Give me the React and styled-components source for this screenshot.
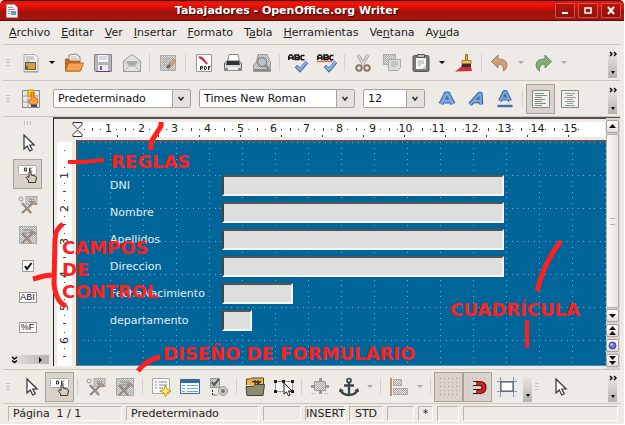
import React from "react";
import styled, { createGlobalStyle, css } from "styled-components";

const FACE = "#eeebe7";
const LINE = "#cfc5bd";
const RED = "#ff2020";
const SEA = "#006699";

const GlobalStyle = createGlobalStyle`
  * { box-sizing: border-box; }
  html, body { margin: 0; background: #fff; }
  body, button, input, select {
    font-family: "DejaVu Sans", sans-serif;
    font-size: 11px;
    color: #222;
  }
`;

/* ---------- window frame ---------- */

const Window = styled.div`
  position: relative;
  display: flex;
  flex-direction: column;
  height: 100vh;
  min-height: 424px;
  border-right: 1px solid #fff;
  border-bottom: 1px solid #fff;
  background: ${FACE};
  overflow: hidden;
`;

const TitleBar = styled.header`
  display: flex;
  align-items: center;
  gap: 3px;
  height: 21px;
  padding: 0 3px 0 6px;
  border-top: 1px solid #3a0b08;
  border-bottom: 1px solid #5c0805;
  border-radius: 5px 5px 0 0;
  background: linear-gradient(#e01408 0, #f41408 15%, #c01009 48%, #9c130c 56%, #ab140c 100%);
`;

const Title = styled.h1`
  flex: 1;
  margin: 0;
  font-size: 11px;
  font-weight: bold;
  text-align: center;
  white-space: nowrap;
  color: #fff;
  text-shadow: 1px 1px 1px #300;
`;

const FrameButton = styled.button`
  display: grid;
  place-items: center;
  width: 20px;
  height: 15px;
  padding: 0;
  border: 1px solid #d3524b;
  border-radius: 1px;
  background: linear-gradient(#b5150e, #8e110b);
`;

const MenuBar = styled.nav`
  display: flex;
  align-items: center;
  gap: 11px;
  height: 24px;
  margin: 0 4px 0 3px;
  padding-left: 6px;
  border-bottom: 1px solid ${LINE};
`;

const MenuItem = styled.button`
  padding: 0;
  border: 0;
  background: none;
  white-space: pre;
`;

/* ---------- toolbars ---------- */

const ToolBar = styled.div`
  display: flex;
  flex: none;
  align-items: center;
  height: ${(p) => p.$height}px;
  margin: 0 4px 0 3px;
  padding-right: 3px;
  border-bottom: 1px solid ${LINE};
`;

const Grip = styled.span`
  flex: none;
  width: ${(p) => (p.$across ? 7 : 4)}px;
  height: ${(p) => (p.$across ? 4 : 7)}px;
  margin: ${(p) => (p.$across ? "4px auto 0" : "0 6px 0 3px")};
  background: repeating-linear-gradient(
    ${(p) => (p.$across ? "to right" : "to bottom")}, #c9c2ba 0 1px, transparent 1px 3px);
`;

const Tool = styled.button`
  display: grid;
  flex: none;
  place-items: center;
  width: 29px;
  height: 30px;
  padding: 0;
  border: 1px solid transparent;
  background: none;
  ${(p) => p.$on && css`
    border-color: #a8a099;
    background: #d9d3cc;
  `}
  svg { display: block; }
`;

const FormatGroup = styled.div`
  display: flex;
  align-items: center;
  margin-left: 7px;
`;

const Drop = styled.button`
  display: grid;
  flex: none;
  place-items: center;
  width: 14px;
  height: 30px;
  padding: 0;
  border: 0;
  background: none;
  &::after {
    content: "";
    border: 3px solid transparent;
    border-top-color: ${(p) => (p.$dim ? "#aaa69f" : "#000")};
    border-bottom: 0;
  }
`;

const Divider = styled.span`
  flex: none;
  width: 1px;
  height: 17px;
  margin: 0 3px;
  background: #d6d0c9;
`;

const More = styled.button`
  display: flex;
  flex: none;
  flex-direction: column;
  align-items: center;
  justify-content: space-between;
  width: 9px;
  height: 30px;
  margin-left: ${(p) => (p.$inline ? "2px" : "auto")};
  padding: ${(p) => (p.$inline ? "22px 0 4px" : "3px 0 4px")};
  border: 0;
  background: linear-gradient(transparent 10%, #b5b1ac);
  &::after {
    content: "";
    border: 2px solid transparent;
    border-top: 3px solid #000;
    border-bottom: 0;
  }
`;

const Combo = styled.select`
  flex: none;
  width: ${(p) => p.$width}px;
  height: 19px;
  margin-left: 8px;
  padding: 0 20px 0 4px;
  border: 1px solid #aaa39b;
  border-radius: 2px;
  appearance: none;
  outline: 0;
  color: #111;
  background:
    url("data:image/svg+xml,%3Csvg xmlns='http://www.w3.org/2000/svg' width='18' height='17'%3E%3Cpath d='M0 0h18v17H0z' fill='%23e5e1dc'/%3E%3Cpath d='M.5 0v17' stroke='%23aaa39b'/%3E%3Cpath d='M6.500 7l2.500 3 2.500-3' fill='none' stroke='%23333' stroke-width='1.600'/%3E%3C/svg%3E")
    right center / 18px 17px no-repeat #fff;
`;

/* ---------- work area ---------- */

const Work = styled.main`
  display: flex;
  flex: 1;
  min-height: 0;
  margin: 0 4px 0 3px;
  border-bottom: 1px solid ${LINE};
`;

const Palette = styled.aside`
  display: flex;
  flex: none;
  flex-direction: column;
  align-items: center;
  width: 50px;
  padding: 0 1px 5px 0;
`;

const PaletteTools = styled.div`
  display: flex;
  flex: 1;
  flex-direction: column;
  justify-content: space-between;
  margin: 3px 0 12px;
`;

const PaletteMore = styled.button`
  display: flex;
  align-items: center;
  justify-content: space-between;
  width: 43px;
  height: 9px;
  padding: 0 7px 0 5px;
  border: 0;
  background: linear-gradient(to right, transparent, #b5b1ac);
`;

const Editor = styled.section`
  display: grid;
  flex: 1;
  grid-template-columns: 22px 1fr;
  grid-template-rows: 21px 1fr;
  min-width: 0;
  margin-bottom: 3px;
  border-top: 2px solid #55524f;
  border-left: 1px solid #222;
`;

const RulerRow = styled.div`
  display: flex;
  grid-column: 1 / -1;
  align-items: center;
  padding-left: 18px;
`;

const Scale = styled.ol`
  display: flex;
  flex: 1;
  height: 15px;
  margin: 0 1px 0 0;
  padding: 0 18px 0 0;
  list-style: none;
  background:
    repeating-linear-gradient(to right, transparent 0 34px, #333 34px 35px, transparent 35px 41px) left bottom / 100% 2px no-repeat,
    #fff;
`;

const Unit = styled.li`
  display: grid;
  flex: 1;
  place-items: center;
  height: 13px;
  line-height: 13px;
  color: #222;
  background:
    linear-gradient(#444, #444) 0 6px / 1px 3px no-repeat,
    linear-gradient(#444, #444) 25% 7px / 1px 1px no-repeat,
    linear-gradient(#444, #444) 75% 7px / 1px 1px no-repeat;
`;

const RulerLead = styled.li`
  width: 9px;
  background: linear-gradient(#444, #444) 1px 7px / 1px 1px no-repeat;
`;

const SideScale = styled.ol`
  width: 15px;
  margin: 2px 0 0 3px;
  padding: 17px 0 0;
  list-style: none;
  overflow: hidden;
  background: linear-gradient(#444, #444) 7px 8px / 1px 1px no-repeat, #fff;
`;

const SideUnit = styled.li`
  height: 33px;
  line-height: 15px;
  text-align: center;
  writing-mode: vertical-rl;
  transform: rotate(180deg);
  background:
    linear-gradient(#444, #444) 6px 0 / 3px 1px no-repeat,
    linear-gradient(#444, #444) 7px 8px / 1px 1px no-repeat,
    linear-gradient(#444, #444) 7px 24px / 1px 1px no-repeat;
`;

const Page = styled.div`
  position: relative;
  min-width: 0;
  padding: 33px 0 0 32px;
  border-top: 2px solid #555;
  border-left: 2px solid #555;
  border-bottom: 1px solid #4a8fb4;
  background: ${SEA};
  overflow: hidden;
`;

const Dots = styled.svg`
  position: absolute;
  inset: 0;
  width: 100%;
  height: 100%;
`;

const Form = styled.form`
  position: relative;
  display: grid;
  gap: 6px;
`;

const Field = styled.label`
  display: grid;
  grid-template-columns: 112px 1fr;
  align-items: center;
  height: 21px;
  color: #e3eef4;
`;

const Entry = styled.input`
  width: ${(p) => p.$width}px;
  height: 21px;
  padding: 0 3px;
  border: 2px solid;
  border-color: #555 #f5f5f5 #f5f5f5 #444;
  border-radius: 0;
  outline: 0;
  background: #dedede;
`;

const ScrollColumn = styled.div`
  display: flex;
  flex: none;
  flex-direction: column;
  gap: 2px;
  width: 14px;
  padding: 2px 0 2px;
  border-top: 1px solid #55524f;
  background: #d8d3cd;
`;

const ScrollButton = styled.button`
  display: grid;
  flex: none;
  place-items: center;
  width: 13px;
  height: 13px;
  padding: 0;
  border: 1px solid #aaa49d;
  border-radius: 2px;
  background: linear-gradient(#fff, #e4dfda);
`;

const Thumb = styled.div`
  display: grid;
  flex: 1;
  place-items: center;
  width: 13px;
  margin: -1px 0;
  border: 1px solid #b4aea7;
  border-radius: 2px;
  background: linear-gradient(to right, #fafafa, #e6e3df);
  &::after {
    content: "";
    width: 5px;
    height: 5px;
    border: solid #b4aea7;
    border-width: 1px 0;
  }
`;

/* ---------- status bar ---------- */

const StatusBar = styled.footer`
  display: flex;
  flex: none;
  gap: 4px;
  height: 20px;
  padding: 2px 6px 3px 8px;
`;

const StatusCell = styled.span`
  flex: ${(p) => (p.$width ? "none" : "1")};
  width: ${(p) => p.$width}px;
  padding: 0 ${(p) => (p.$tight ? 0 : 4)}px;
  border: 1px solid;
  border-color: #bbb5ae #fff #fff #bbb5ae;
  line-height: 14px;
  text-align: ${(p) => (p.$tight ? "center" : "left")};
  white-space: pre;
`;

/* ---------- red notes above the window ---------- */

const Strokes = styled.svg`
  position: absolute;
  top: 0;
  left: 0;
  pointer-events: none;
`;

const Note = styled.strong`
  position: absolute;
  left: ${(p) => p.$x}px;
  top: ${(p) => p.$y}px;
  color: ${RED};
  font-size: 18px;
  line-height: 22px;
  white-space: pre;
  pointer-events: none;
`;

/* ---------- icons ---------- */

const Svg = ({ children, size = 20 }) => (
  <svg width={size} height={size} viewBox="0 0 20 20" fill="none" aria-hidden="true">{children}</svg>
);

const Pointer = () => (
  <path d="M6 2v14l3.300-3 2.400 5 2.500-1.200-2.400-4.800h4.300z" fill="#fff" stroke="#333" strokeWidth="1.200" />
);

const Hand = () => (
  <path d="M10.500 18.500v-2L8 13.500l1-1 2 1V8q1-1.500 2 0v3l4 1q1.500.500 1.500 2l-1 4.500z" fill="#d9cdc0" stroke="#333" />
);

const Hammer = () => (
  <>
    <path d="M4 18l11-10M4 8l9 10" stroke="#8c8a87" strokeWidth="2.200" />
    <path d="M12 7l4 0 2 3M9 13l4 5" stroke="#b08a75" strokeWidth="2" />
  </>
);

const Spell = ({ red }) => (
  <>
    <g stroke="#111" strokeWidth="1.500">
      <path d="M.800 7V3.500L2 2h1.500L5 3.500V7M.700 5H5" />
      <path d="M7 2v4.500h3.500l1-1-1-1H7 10.500l.800-1-.800-1.500z" />
      <path d="M16.500 2.500h-2.700l-.800 1v2.500l.800.700h2.700" />
    </g>
    {red && <path d="M0 9l1.500-1 1.500 1 1.500-1L6 9l1.500-1L9 9l1.500-1L12 9l1.500-1L15 9" stroke="#e22" />}
    <path d="M8 13l4 4 7-8" stroke="#3f6da5" strokeWidth="3.600" />
    <path d="M8.500 13.500l3.500 3 6.500-7.500" stroke="#8db4e2" strokeWidth="2" />
  </>
);

const icons = {
  text: (
    <>
      <path d="M3 1.500h11l3 3v14H3z" fill="#f2f2f0" stroke="#aaa" />
      <path d="M5 4h8M5 6h9M5 8h4" stroke="#aaa" />
      <path d="M4 9h11v8H4z" fill="#6d5828" />
      <path d="M5 10h9v3H5z" fill="#a8a090" />
      <path d="M7 13l3-2 4 2v3H7z" fill="#e0a22c" />
      <path d="M2.500 19h15" stroke="#999" />
    </>
  ),
  open: (
    <>
      <path d="M5 8V2l7-1 4 3v7H5z" fill="#eee" stroke="#888" />
      <path d="M7 4h5M7 6h7" stroke="#bbb" />
      <path d="M1.500 18V6h3l1 2h10v10z" fill="#c46a25" stroke="#b55d1d" />
      <path d="M1.500 18l3-8h15l-3 8z" fill="#f5a352" stroke="#c56a24" />
    </>
  ),
  save: (
    <>
      <path d="M1.500 1.500h17v17h-16l-1-1z" fill="#b4b4bd" stroke="#84848f" />
      <path d="M5 2h10v7H5z" fill="#f4f4f6" />
      <path d="M6 4h8M6 6h8" stroke="#bbb" />
      <path d="M5 12h10v6H5z" fill="#ececf0" />
      <path d="M7 13h2v4H7z" fill="#666" />
      <path d="M3 18.500h14" stroke="#713c6d" />
    </>
  ),
  mail: (
    <>
      <path d="M1.500 8L10 1.500 18.500 8v10.500h-17z" fill="#e3e3e0" stroke="#999" />
      <path d="M4 8h12l-3 4H7z" fill="#aaa" />
      <path d="M2 18l6-6h4l6 6M2 8l6 5h4l6-5" stroke="#aaa" />
    </>
  ),
  edit: (
    <>
      <path d="M2.500 2.500h15v15h-15z" fill="url(#dither)" stroke="#aaa" />
      <path d="M5 6h10M5 9h8M5 12h5" stroke="#aaa" />
      <path d="M17 7l-6 6-2 2" stroke="#7c6048" strokeWidth="3" />
      <path d="M17 7l-5 5" stroke="#e0a878" strokeWidth="2" />
    </>
  ),
  pdf: (
    <>
      <path d="M2.500 1.500h15v17h-15z" fill="#fbfbfb" stroke="#999" />
      <path d="M5 4l4 2 4 5M7 4l3 4" stroke="#dc2430" strokeWidth="2" />
      <path d="M6.500 17v-3.500h2v1.700h-2M10.500 13.500v3h1.300l.7-.8v-1.500l-.7-.7zM14.500 17v-3.500h2M14.500 15h1.500" stroke="#222" />
    </>
  ),
  print: (
    <>
      <path d="M4.500 9L6 1.500h9L16.500 9" fill="#fff" stroke="#888" />
      <path d="M1.500 16V10l3-2h11l3 2v6z" fill="#d8d8d8" stroke="#666" />
      <path d="M4 8h12l1 4H3z" fill="#333" />
      <path d="M1 15h18v3H1z" fill="#888" />
      <path d="M5 14h10v3H5z" fill="#eee" />
    </>
  ),
  preview: (
    <>
      <path d="M4.500 9L6 1.500h9l3.500 8v9h-17V12z" fill="url(#dither)" stroke="#999" />
      <path d="M2 16h16v2H2z" fill="#888" />
      <circle cx="10" cy="9" r="4.500" fill="#b8c4cb" stroke="#888" strokeWidth="1.500" />
      <path d="M13 12l4 4" stroke="#888" strokeWidth="2.500" />
    </>
  ),
  spell: <Spell />,
  autospell: <Spell red />,
  cut: (
    <>
      <path d="M5 2l6 10M15 2L9 12" stroke="#999" strokeWidth="3.200" />
      <path d="M5 2l6 10M15 2L9 12" stroke="#ddd" strokeWidth="1.500" />
      <circle cx="6" cy="15" r="2.700" stroke="#8a7768" strokeWidth="2" />
      <circle cx="14" cy="15" r="2.700" stroke="#8a7768" strokeWidth="2" />
    </>
  ),
  copy: (
    <>
      <path d="M1.500 1.500h12v10h-12z" fill="url(#dither)" stroke="#aaa" />
      <path d="M6.500 6.500h12v8l-3 3h-9z" fill="#deddd9" stroke="#aaa" />
      <path d="M9 9h7M9 11h7M9 13h5" stroke="#aaa" />
    </>
  ),
  paste: (
    <>
      <rect x="2" y="2.500" width="16" height="16" rx="1.500" fill="#777a6c" stroke="#555850" />
      <path d="M5 5h10v11H5z" fill="#f5f5f2" />
      <path d="M6.500 1.500h7v3h-7z" fill="#bbb" stroke="#555" />
      <path d="M7 8h6M7 10h6M7 12h3" stroke="#aaa" />
      <path d="M15 12l-4 4h4z" fill="#ccc" />
    </>
  ),
  brush: (
    <>
      <path d="M11.500 1.500h2v6h-2z" fill="#e5a85c" stroke="#a36a24" />
      <path d="M8 7.500h9v3H8z" fill="#f0c36a" stroke="#a37a24" />
      <path d="M8 11h9v4H7z" fill="#333" />
      <path d="M7 14h10l1 4-17 .5z" fill="#d52e37" />
    </>
  ),
  undo: <path d="M1.500 8.500L8 2v4q9 0 9 6 0 4-3.500 6 1-7-5.500-7v4z" fill="#cf9d7b" stroke="#a87d62" />,
  redo: <path d="M18.500 8.500L12 2v4q-9 0-9 6 0 4 3.500 6-1-7 5.500-7v4z" fill="#85ac79" stroke="#5f8f62" />,
  styles: (
    <>
      <path d="M1.500 1.500h17v17h-17z" fill="#e8e8e2" stroke="#888" />
      <path d="M7 1v18M13 1v18M1 7h18M1 13h18" stroke="#999" />
      <path d="M7 1h6v6H7z" fill="#f9cf16" stroke="#b99a1a" />
      <path d="M9 15l-1.500-4L10 11V4q1.500-1.500 2.500 0v4l4 1.500v5L15 16H11z" fill="#ff9b2f" stroke="#d96a13" />
      <path d="M10 15.500h6V18h-6z" fill="#1e4f92" />
    </>
  ),
  bold: (
    <>
      <path d="M4 15L9 5h2l5 10M6 12h8" stroke="#2e5f9e" strokeWidth="5" strokeLinejoin="round" />
      <path d="M4 15L9 5h2l5 10M6 12h8" stroke="#7ba7de" strokeWidth="3" strokeLinejoin="round" />
    </>
  ),
  italic: (
    <>
      <path d="M4 15.500L13.500 5h1l.500 10.500M7 12h8" stroke="#2e5f9e" strokeWidth="4.400" strokeLinejoin="round" />
      <path d="M4 15.500L13.500 5h1l.500 10.500M7 12h8" stroke="#7ba7de" strokeWidth="2.400" strokeLinejoin="round" />
    </>
  ),
  underline: (
    <>
      <path d="M5 12L9.500 3h1L15 12M7 9.500h6" stroke="#2e5f9e" strokeWidth="4" strokeLinejoin="round" />
      <path d="M5 12L9.500 3h1L15 12M7 9.500h6" stroke="#7ba7de" strokeWidth="2" strokeLinejoin="round" />
      <path d="M2.500 17h15" stroke="#3c6dad" strokeWidth="2.400" />
    </>
  ),
  left: (
    <>
      <path d="M1.500 1.500h17v17h-17z" fill="#eef0ea" stroke="#888" />
      <path d="M4 4.500h9M4 6.500h12M4 8.500h7M4 10.500h10M4 12.500h7M4 14.500h11M4 16.500h7" stroke="#888" />
    </>
  ),
  center: (
    <>
      <path d="M1.500 1.500h17v17h-17z" fill="#eef0ea" stroke="#888" />
      <path d="M5 4.500h10M7 6.500h6M4 8.500h12M7 10.500h6M5 12.500h10M7 14.500h6M5 16.500h10" stroke="#999" />
    </>
  ),
  pointer: <Pointer />,
  design: (
    <>
      <rect x=".500" y="1.500" width="18" height="9" rx="1" fill="#fff" stroke="#aaa" />
      <path d="M6.500 4v3h2V4zM11.500 3.500v4M14 3.500l-2 2 2 2" stroke="#333" />
      <Hand />
    </>
  ),
  control: (
    <>
      <rect x="8" y="1.500" width="11" height="8" fill="url(#dither)" stroke="#aaa" />
      <path d="M11.500 4v3h2V4zM15.500 3.500v4" stroke="#999" />
      <circle cx="3" cy="4" r="2" stroke="#999" />
      <Hammer />
    </>
  ),
  props: (
    <>
      <path d="M1.500 1.500h17v17h-17z" fill="url(#dither)" stroke="#aaa" />
      <path d="M5 5h10M5 8h10M5 11h4" stroke="#888" />
      <Hammer />
    </>
  ),
  check: (
    <>
      <path d="M4.500 4.500h11v11h-11z" fill="#fff" stroke="#999" />
      <path d="M7 10l2 3 4.500-6" stroke="#111" strokeWidth="2" />
    </>
  ),
  wizard: (
    <>
      <path d="M1.500 1.500h17v15h-17z" fill="#f8f8f8" stroke="#aaa" />
      <path d="M4 5h2M8 5h8M4 8h2M8 8h8M4 11h2M8 11h4" stroke="#888" />
      <path d="M14.500 8l1.700 4.300 4 1.700-4 1.700-1.700 4-1.700-4-4-1.700 4-1.700z" fill="#ffee62" stroke="#b89b1e" />
    </>
  ),
  table: (
    <>
      <path d="M.500 2.500h19v14H.500z" fill="#f8fafc" stroke="#3568a3" />
      <path d="M1 3h18v3H1z" fill="#3568a3" />
      <path d="M2 8.500h3M2 11.500h3M2 14.500h3M7 8.500h11M7 11.500h11M7 14.500h11" stroke="#7fa0c6" />
    </>
  ),
  more: (
    <>
      <path d="M1.500 1.500h9v9h-9z" fill="url(#dither)" stroke="#999" />
      <path d="M3 5l2 3 5-6" stroke="#555" strokeWidth="2" />
      <circle cx="14" cy="14" r="4.500" fill="#ccc" stroke="#999" />
      <circle cx="14" cy="14" r="2" fill="#777" />
      <path d="M3.500 13v5h5" stroke="#333" strokeDasharray="2 1" />
    </>
  ),
  folder: (
    <>
      <path d="M1.500 8V2h4l1-1h12v9" fill="#e9b84a" stroke="#54451e" />
      <path d="M7 5l3-1v2l3-2v3l3-3" stroke="#222" strokeWidth="1.300" />
      <path d="M1 9.500h7l2-2h9.500l-1.500 11H2z" fill="#8b8d73" stroke="#404233" />
    </>
  ),
  select: (
    <>
      <path d="M1.500 4.500h17v10h-17z" fill="#f8f8f8" stroke="#999" />
      <path d="M0 3h3v3H0zM8 3h3v3H8zM17 3h3v3h-3zM0 13h3v3H0zM17 13h3v3h-3z" fill="#222" />
      <path d="M10 6v11l2.500-2 2 4 1.500-1-1.500-4H18z" fill="#fff" stroke="#222" />
    </>
  ),
  position: (
    <>
      <path d="M4.500 4.500h11v9h-11z" fill="url(#dither)" stroke="#999" />
      <path d="M9 1h3v3H9zM9 14h3v3H9zM1 8h3v3H1zM16 8h3v3h-3z" fill="#999" />
      <path d="M1.500 16.500h4M15 16.500h4" stroke="#aaa" strokeDasharray="1 1" />
    </>
  ),
  anchor: (
    <>
      <circle cx="10" cy="3.500" r="2" stroke="#3b444b" strokeWidth="1.700" />
      <path d="M10 6v12M5 8.500h10M1.500 13q2 5 8.500 5t8.500-5" stroke="#3b444b" strokeWidth="2.300" />
      <path d="M0 15l1-4 4 3zM20 15l-1-4-4 3z" fill="#3b444b" />
    </>
  ),
  align: (
    <>
      <path d="M2 1v18" stroke="#c29068" strokeWidth="2" />
      <path d="M4.500 2.500h8v6h-8zM4.500 11.500h14v6h-14z" fill="url(#dither)" stroke="#aaa" />
    </>
  ),
  grid: (
    <path d="M1 1.500h19M1 5.500h19M1 9.500h19M1 13.500h19M1 17.500h19" stroke="#999" strokeDasharray="1 3" />
  ),
  magnet: (
    <>
      <path d="M0 1.500h18M0 17.500h18M0 9.500h5" stroke="#aaa" strokeDasharray="1 3" />
      <path d="M5 6.500h7q4 0 4 4t-4 4H5" stroke="#40100e" strokeWidth="5" />
      <path d="M6 6.500h6q4 0 4 4t-4 4H6" stroke="#d9221b" strokeWidth="3" />
      <path d="M5 6.500h3M5 14.500h3" stroke="#ddd" strokeWidth="3" />
    </>
  ),
  guides: (
    <>
      <path d="M0 4.500h20M0 14.500h20M3.500 0v20M16.500 0v20" stroke="#7c9dbb" />
      <path d="M4 5h12v9H4z" fill="#fff" stroke="#444" />
    </>
  ),
};

const Icon = ({ name }) => <Svg>{icons[name]}</Svg>;

const FieldBadge = styled.span`
  display: block;
  width: 18px;
  height: 11px;
  border: 1px solid #999;
  background: #fff;
  color: #111;
  font-family: "Liberation Sans", sans-serif;
  font-size: 9px;
  line-height: 9px;
  text-align: center;
`;

const chevrons = (
  <svg width="8" height="7" viewBox="0 0 8 7" fill="none" aria-hidden="true">
    <path d="M1 1l2 2-2 2M5 1l2 2-2 2" stroke="#000" strokeWidth="1.400" />
  </svg>
);

const arrowPaths = {
  up: "M2 7l3.500-4L9 7z",
  down: "M2 4l3.500 4L9 4z",
  top: "M2 5l3.500-4L9 5zM2 10l3.500-4L9 10z",
  end: "M2 1l3.500 4L9 1zM2 6l3.500 4L9 6z",
};

const Arrow = ({ kind }) => (
  <svg width="11" height="11" aria-hidden="true"><path d={arrowPaths[kind]} fill="#111" /></svg>
);

/* ---------- data ---------- */

const menus = [
  ["", "A", "rchivo"], ["", "E", "ditar"], ["", "V", "er"], ["", "I", "nsertar"], ["", "F", "ormato"],
  ["T", "a", "bla"], ["", "H", "erramientas"], ["Ve", "n", "tana"], ["Ay", "u", "da"],
];

const standardTools = [
  ["text", "Nuevo"], "drop", ["open", "Abrir"], ["save", "Guardar"], ["mail", "Enviar"], "|",
  ["edit", "Modo edición"], "|", ["pdf", "Exportar a PDF"], ["print", "Imprimir"], ["preview", "Vista preliminar"], "|",
  ["spell", "Ortografía"], ["autospell", "Revisión automática"], "|", ["cut", "Cortar"], ["copy", "Copiar"],
  ["paste", "Pegar"], "drop", ["brush", "Pincel de formato"], "|", ["undo", "Deshacer"], "dim", ["redo", "Restaurar"], "dim",
];

const formatTools = [
  ["bold", "Negrita"], ["italic", "Cursiva"], ["underline", "Subrayado"], "|",
  ["left", "Alinear a la izquierda", true], ["center", "Centrar"],
];

const designTools = [
  ["pointer", "Seleccionar"], ["design", "Modo diseño", true], "|", ["control", "Control"], ["props", "Formulario"], "|",
  ["wizard", "Navegador"], ["table", "Agregar campo"], ["more", "Más controles"], "|", ["folder", "Abrir en modo diseño"],
  ["select", "Selección"], "|", ["position", "Posición"], ["anchor", "Cambiar ancla"], "dim", "|", ["align", "Alineación"],
  "dim", "|", ["grid", "Mostrar cuadrícula", true], ["magnet", "Capturar en cuadrícula", true], ["guides", "Guías"],
];

const fields = [
  ["DNI", 282], ["Nombre", 282], ["Apellidos", 282], ["Direccion", 282], ["FechaNacimiento", 71], ["departamento", 30],
];

const ToolRun = ({ items }) =>
  items.map((item, i) => {
    if (item === "|") return <Divider key={i} />;
    if (item === "drop" || item === "dim") return <Drop key={i} $dim={item === "dim"} aria-label="Opciones" />;
    const [name, label, on] = item;
    return <Tool key={i} aria-label={label} $on={on}><Icon name={name} /></Tool>;
  });

const gridSteps = [0, 6, 11, 17, 22, 28];

export default function App() {
  return (
    <Window>
      <GlobalStyle />
      <TitleBar>
        <svg width="12" height="14" viewBox="0 0 12 14" aria-hidden="true">
          <path d="M.500.500h8l3 3v10H.500z" fill="#eee" stroke="#aaa" />
          <path d="M2 3.500h5M2 5.500h7M2 7.500h2M2 9.500h2" stroke="#999" />
          <path d="M5 7h5v4H5z" fill="#6c9ac2" />
        </svg>
        <Title>Tabajadores - OpenOffice.org Writer</Title>
        <FrameButton aria-label="Minimizar"><svg width="10" height="9"><path d="M2 7h6" stroke="#fff" strokeWidth="2" /></svg></FrameButton>
        <FrameButton aria-label="Maximizar"><svg width="10" height="9"><path d="M2 2h6v5H2z" fill="none" stroke="#fff" strokeWidth="1.500" /></svg></FrameButton>
        <FrameButton aria-label="Cerrar"><svg width="10" height="9"><path d="M2 1l6 7M8 1L2 8" stroke="#fff" strokeWidth="2" /></svg></FrameButton>
      </TitleBar>

      <MenuBar>
        {menus.map(([before, key, after]) => (
          <MenuItem key={after}>{before}<u>{key}</u>{after}</MenuItem>
        ))}
      </MenuBar>

      <ToolBar $height={36}>
        <Grip />
        <ToolRun items={standardTools} />
        <More aria-label="Más">{chevrons}</More>
      </ToolBar>

      <ToolBar $height={36}>
        <Grip />
        <Tool aria-label="Estilos y formato"><Icon name="styles" /></Tool>
        <Combo $width={138} aria-label="Estilo"><option>Predeterminado</option></Combo>
        <Combo $width={156} aria-label="Fuente"><option>Times New Roman</option></Combo>
        <Combo $width={62} aria-label="Tamaño"><option>12</option></Combo>
        <FormatGroup><ToolRun items={formatTools} /></FormatGroup>
        <More aria-label="Más">{chevrons}</More>
      </ToolBar>

      <Work>
        <Palette>
          <Grip $across />
          <PaletteTools>
            <Tool aria-label="Seleccionar"><Icon name="pointer" /></Tool>
            <Tool aria-label="Modo diseño" $on><Icon name="design" /></Tool>
            <Tool aria-label="Control"><Icon name="control" /></Tool>
            <Tool aria-label="Formulario"><Icon name="props" /></Tool>
            <Tool aria-label="Casilla de verificación"><Icon name="check" /></Tool>
            <Tool aria-label="Campo de texto"><FieldBadge>ABI</FieldBadge></Tool>
            <Tool aria-label="Campo formateado"><FieldBadge>%F</FieldBadge></Tool>
          </PaletteTools>
          <PaletteMore aria-label="Más">
            <svg width="7" height="8" fill="none"><path d="M1 1l2.500 2L6 1M1 4.500l2.500 2 2.500-2" stroke="#000" strokeWidth="1.400" /></svg>
            <svg width="3" height="6"><path d="M0 0l3 3-3 3z" /></svg>
          </PaletteMore>
        </Palette>

        <Editor>
          <RulerRow>
            <svg width="11" height="17" viewBox="0 0 11 17" fill="#fff" aria-hidden="true">
              <path d="M1 1.500h9v2L5.500 8 1 3.500zM1 15.500h9v-2L5.500 9 1 13.500z" stroke="#333" />
            </svg>
            <Scale>
              <RulerLead />
              {Array.from({ length: 15 }, (_, i) => <Unit key={i}>{i + 1}</Unit>)}
            </Scale>
          </RulerRow>
          <SideScale>
            {[1, 2, 3, 4, 5, 6].map((n) => <SideUnit key={n}>{n}</SideUnit>)}
          </SideScale>
          <Page>
            <Dots aria-hidden="true">
              <defs>
                <pattern id="rows" x="32" y="33" width="33" height="33" patternUnits="userSpaceOnUse">
                  {gridSteps.map((s) => (
                    <path key={s} d={`M${s} 0h1v1h-1zM0 ${s}h1v1h-1z`} fill="#6fa9c6" />
                  ))}
                </pattern>
              </defs>
              <rect width="100%" height="100%" fill="url(#rows)" />
            </Dots>
            <Form>
              {fields.map(([label, width]) => (
                <Field key={label}>{label}<Entry $width={width} /></Field>
              ))}
            </Form>
          </Page>
        </Editor>

        <ScrollColumn>
          <ScrollButton aria-label="Subir"><Arrow kind="up" /></ScrollButton>
          <Thumb />
          <ScrollButton aria-label="Bajar"><Arrow kind="down" /></ScrollButton>
          <ScrollButton aria-label="Página anterior"><Arrow kind="top" /></ScrollButton>
          <ScrollButton aria-label="Navegación">
            <svg width="9" height="9"><circle cx="4.500" cy="4.500" r="3.500" fill="#6d72e8" stroke="#3a3c99" /><circle cx="3.500" cy="3.500" r="1.300" fill="#ccd" /></svg>
          </ScrollButton>
          <ScrollButton aria-label="Página siguiente"><Arrow kind="end" /></ScrollButton>
        </ScrollColumn>
      </Work>

      <ToolBar $height={34}>
        <Grip />
        <ToolRun items={designTools} />
        <More $inline aria-label="Más" />
        <Grip as="i" />
        <Tool aria-label="Seleccionar"><Icon name="pointer" /></Tool>
        <More aria-label="Más">{chevrons}</More>
      </ToolBar>

      <StatusBar>
        <StatusCell $width={114}>Página  1 / 1</StatusCell>
        <StatusCell $width={133}>Predeterminado</StatusCell>
        <StatusCell $width={38} />
        <StatusCell $width={40} $tight>INSERT</StatusCell>
        <StatusCell $width={34} $tight>STD</StatusCell>
        <StatusCell $width={27} />
        <StatusCell $width={15} $tight>*</StatusCell>
        <StatusCell $width={22} />
        <StatusCell />
      </StatusBar>

      <Strokes width="625" height="425" fill="none" stroke={RED} strokeWidth="5" aria-hidden="true">
        <defs>
          <pattern id="dither" width="2" height="2" patternUnits="userSpaceOnUse" stroke="none">
            <path d="M0 0h2v2H0z" fill="#e4e2de" />
            <path d="M0 0h1v1H0zM1 1h1v1H1z" fill="#aaa" />
          </pattern>
        </defs>
        <path d="M68 162h14l22-2" strokeWidth="4" />
        <path d="M161 122v4l-10 16v8" />
        <path d="M63 224q-8 5-8 16l-1 44q2 18 12 22" />
        <path d="M33 279l11-3 8-1" />
        <path d="M138 371q8-11 22-14" />
        <path d="M561 241q-17 21-24 50" />
        <path d="M527 320v28" strokeWidth="4" />
      </Strokes>
      <Note $x={111} $y={151}>REGLAS</Note>
      <Note $x={62} $y={237}>{"CAMPOS\nDE\nCONTROL"}</Note>
      <Note $x={163} $y={343}>DISEÑO DE FORMULARIO</Note>
      <Note $x={450} $y={299}>CUADRÍCULA</Note>
    </Window>
  );
}
